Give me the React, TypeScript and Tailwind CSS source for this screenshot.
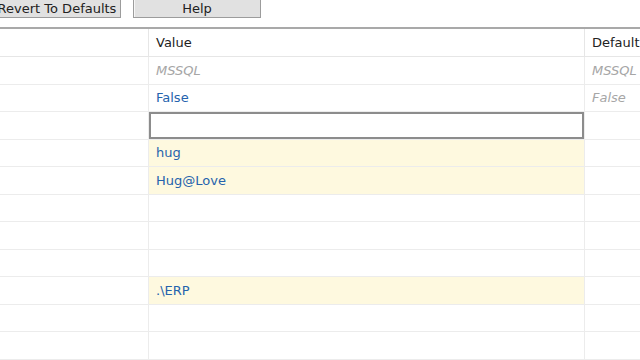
import React from 'react';

type Row = {
  value?: string;
  def?: string;
  kind?: 'gray' | 'blue' | 'edit';
  yellow?: boolean;
  h: string;
};

const rows: Row[] = [
  { value: 'MSSQL', def: 'MSSQL', kind: 'gray', h: 'h-[28px]' },
  { value: 'False', def: 'False', kind: 'blue', h: 'h-[27px]' },
  { kind: 'edit', h: 'h-[28px]' },
  { value: 'hug', kind: 'blue', yellow: true, h: 'h-[27px]' },
  { value: 'Hug@Love', kind: 'blue', yellow: true, h: 'h-[28px]' },
  { h: 'h-[27px]' },
  { h: 'h-[28px]' },
  { h: 'h-[27px]' },
  { value: '.\\ERP', kind: 'blue', yellow: true, h: 'h-[28px]' },
  { h: 'h-[27px]' },
  { h: 'h-[28px]' },
];

export default function App() {
  return (
    <div className="w-[640px] h-[360px] overflow-hidden bg-white text-[12px] text-[#333]" style={{ fontFamily: '"DejaVu Sans", Verdana, sans-serif' }}>
      {/* Toolbar */}
      <div className="h-[27px] flex items-start gap-[12px] -ml-[7px]">
        <button className="-mt-[8px] h-[26px] w-[128px] border border-[#9c9c9c] bg-[#e1e1e1] shadow-[inset_1px_1px_0_#f6f6f6] text-[13px] text-[#222] pt-[6px] leading-none">
          Revert To Defaults
        </button>
        <button className="-mt-[8px] h-[26px] w-[128px] border border-[#9c9c9c] bg-[#e1e1e1] shadow-[inset_1px_1px_0_#f6f6f6] text-[13px] text-[#222] pt-[6px] leading-none">
          Help
        </button>
      </div>
      <div className="h-[2px] bg-[#a9a9a9]" />

      {/* Grid */}
      <div className="flex h-[28px] border-b border-[#e6e6e6]">
        <div className="w-[149px] border-r border-[#e6e6e6]" />
        <div className="w-[436px] border-r border-[#e6e6e6] pl-[7px] flex items-center text-[13px] text-[#222]">Value</div>
        <div className="flex-1 pl-[7px] flex items-center text-[13px] text-[#222]">Default</div>
      </div>

      {rows.map((r, i) => (
        <div key={i} className={`flex ${r.h} border-b border-[#ececec]`}>
          <div className="w-[149px] border-r border-[#ececec]" />
          {r.kind === 'edit' ? (
            <div className="w-[436px] border-r border-[#ececec]">
              <div className="h-full w-[435px] border-2 border-[#8c8c8c] bg-white" />
            </div>
          ) : (
            <div
              className={`w-[436px] border-r border-[#ececec] pl-[7px] flex items-center text-[13px] ${
                r.yellow ? 'bg-[#fef9df]' : ''
              } ${r.kind === 'gray' ? 'italic text-[#a6a6a6]' : 'text-[#2563ad]'}`}
            >
              {r.value}
            </div>
          )}
          <div className="flex-1 pl-[7px] flex items-center italic text-[13px] text-[#a6a6a6]">{r.def}</div>
        </div>
      ))}
    </div>
  );
}
